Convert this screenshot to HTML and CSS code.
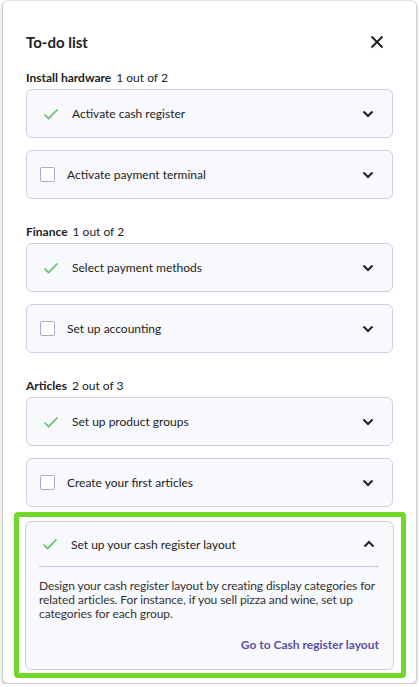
FILE: index.html
```html
<!DOCTYPE html>
<html lang="en">

<head>
    <meta charset="UTF-8">
    <meta name="viewport" content="width=device-width, initial-scale=1.0">
    <title>To-do list</title>
    <link rel="stylesheet" href="styles.css">
</head>

<body>
    <div class="todo-panel">
        <div class="todo-header">
            <h1>To-do list</h1>
            <button class="close-btn" aria-label="Close">
                <svg width="14" height="14" viewBox="0 0 14 14"><path d="M1.5 1.5l11 11M12.5 1.5l-11 11" stroke="#222" stroke-width="2" fill="none"/></svg>
            </button>
        </div>

        <div class="section">
            <div class="section-title"><b>Install hardware</b><span>1 out of 2</span></div>
            <div class="task">
                <div class="task-row">
                    <svg class="check" width="16" height="12" viewBox="0 0 16 12"><path d="M1.5 6.5l4 4 9-9" stroke="#5cbf63" stroke-width="1.6" fill="none"/></svg>
                    <span class="task-name done">Activate cash register</span>
                    <svg class="chevron" width="12" height="8" viewBox="0 0 12 8"><path d="M1.5 1.5l4.5 4.5 4.5-4.5" stroke="#222" stroke-width="2" fill="none"/></svg>
                </div>
            </div>
            <div class="task">
                <div class="task-row">
                    <span class="checkbox"></span>
                    <span class="task-name">Activate payment terminal</span>
                    <svg class="chevron" width="12" height="8" viewBox="0 0 12 8"><path d="M1.5 1.5l4.5 4.5 4.5-4.5" stroke="#222" stroke-width="2" fill="none"/></svg>
                </div>
            </div>
        </div>

        <div class="section">
            <div class="section-title"><b>Finance</b><span>1 out of 2</span></div>
            <div class="task">
                <div class="task-row">
                    <svg class="check" width="16" height="12" viewBox="0 0 16 12"><path d="M1.5 6.5l4 4 9-9" stroke="#5cbf63" stroke-width="1.6" fill="none"/></svg>
                    <span class="task-name done">Select payment methods</span>
                    <svg class="chevron" width="12" height="8" viewBox="0 0 12 8"><path d="M1.5 1.5l4.5 4.5 4.5-4.5" stroke="#222" stroke-width="2" fill="none"/></svg>
                </div>
            </div>
            <div class="task">
                <div class="task-row">
                    <span class="checkbox"></span>
                    <span class="task-name">Set up accounting</span>
                    <svg class="chevron" width="12" height="8" viewBox="0 0 12 8"><path d="M1.5 1.5l4.5 4.5 4.5-4.5" stroke="#222" stroke-width="2" fill="none"/></svg>
                </div>
            </div>
        </div>

        <div class="section">
            <div class="section-title"><b>Articles</b><span>2 out of 3</span></div>
            <div class="task">
                <div class="task-row">
                    <svg class="check" width="16" height="12" viewBox="0 0 16 12"><path d="M1.5 6.5l4 4 9-9" stroke="#5cbf63" stroke-width="1.6" fill="none"/></svg>
                    <span class="task-name done">Set up product groups</span>
                    <svg class="chevron" width="12" height="8" viewBox="0 0 12 8"><path d="M1.5 1.5l4.5 4.5 4.5-4.5" stroke="#222" stroke-width="2" fill="none"/></svg>
                </div>
            </div>
            <div class="task">
                <div class="task-row">
                    <span class="checkbox"></span>
                    <span class="task-name">Create your first articles</span>
                    <svg class="chevron" width="12" height="8" viewBox="0 0 12 8"><path d="M1.5 1.5l4.5 4.5 4.5-4.5" stroke="#222" stroke-width="2" fill="none"/></svg>
                </div>
            </div>
            <div class="highlight">
                <div class="task open">
                    <div class="task-row">
                        <svg class="check" width="16" height="12" viewBox="0 0 16 12"><path d="M1.5 6.5l4 4 9-9" stroke="#5cbf63" stroke-width="1.6" fill="none"/></svg>
                        <span class="task-name done">Set up your cash register layout</span>
                        <svg class="chevron" width="12" height="8" viewBox="0 0 12 8"><path d="M1.5 6.5l4.5-4.5 4.5 4.5" stroke="#222" stroke-width="2" fill="none"/></svg>
                    </div>
                    <div class="task-body">
                        <p>Design your cash register layout by creating display categories for related articles. For instance, if you sell pizza and wine, set up categories for each group.</p>
                        <a href="#" class="task-link">Go to Cash register layout</a>
                    </div>
                </div>
            </div>
        </div>
    </div>
</body>

</html>
```

FILE: styles.css
```css
body {
    font-family: Lato, "Open Sans", sans-serif;
    background-color: #fff;
    color: #222;
    margin: 0;
    padding: 0;
}

.todo-panel {
    margin: 0 2px 0 2px;
    width: 415px;
    box-sizing: border-box;
    height: 684px;
    border: 1px solid #cfcfcf;
    border-top-color: #e2e2e2;
    border-radius: 6px;
    box-shadow: 0 2px 3px rgba(0, 0, 0, 0.25);
    padding: 22px 23px 0 23px;
}

.todo-header {
    display: flex;
    justify-content: space-between;
    align-items: center;
    height: 38px;
}

.todo-header h1 {
    font-size: 15px;
    font-weight: 700;
    margin: 0;
}

.close-btn {
    border: none;
    background: none;
    padding: 0;
    margin-right: 9px;
    display: flex;
}

.section {
    display: flex;
    flex-direction: column;
    gap: 12px;
    margin-top: 9px;
}

.section + .section {
    margin-top: 25px;
}

.section-title {
    font-size: 12px;
    line-height: 15px;
    margin-bottom: -8px;
}

.section-title span {
    margin-left: 5px;
}

.task {
    background-color: #f8f9fc;
    border: 1px solid #cdcfe4;
    border-radius: 6px;
}

.task-row {
    display: flex;
    align-items: center;
    height: 47px;
    padding: 0 18px 0 13px;
    font-size: 12px;
}

.check {
    margin-left: 3px;
    margin-right: 13px;
}

.checkbox {
    width: 13px;
    height: 13px;
    border: 1px solid #a9acce;
    border-radius: 2px;
    background: #fff;
    margin-right: 12px;
}

.task-name {
    flex: 1;
}

.highlight {
    border: 5px solid #72d828;
    border-radius: 4px;
    padding: 4px 7px 3px 6px;
    margin: -7px -13px 0 -12px;
}

.task.open .task-row {
    height: 44px;
}

.task-body {
    margin: 0 14px 0 13px;
    border-top: 1px solid #c4c6e2;
    padding: 12px 0 16px;
    font-size: 12px;
}

.task-body p {
    margin: 0;
    line-height: 14px;
    letter-spacing: -0.1px;
    color: #333;
}

.task-link {
    display: block;
    text-align: right;
    margin-top: 16px;
    color: #5b4ea3;
    font-weight: 700;
    text-decoration: none;
    line-height: 16px;
}
```
